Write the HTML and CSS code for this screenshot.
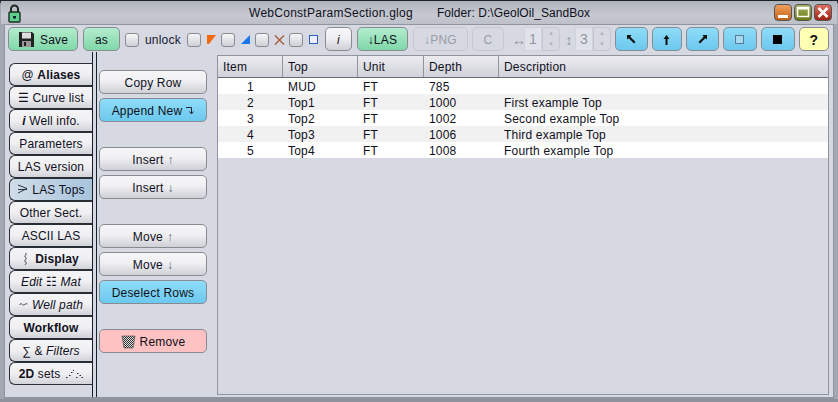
FILE: index.html
```html
<!DOCTYPE html>
<html lang="en">
<head>
<meta charset="utf-8">
<title>WebConstParamSection.glog</title>
<link rel="stylesheet" href="styles.css">
</head>
<body>
<div class="window">
  <header class="titlebar">
    <svg class="lock" width="13" height="19" viewBox="0 0 13 19"><path d="M3 9V5a3.500 3.500 0 0 1 7 0v4" fill="none" stroke="#1a2a20" stroke-width="2"/><rect x="1" y="8" width="11" height="10" rx="1" fill="#5fd08c" stroke="#1a2a20" stroke-width="1.400"/><rect x="5" y="12" width="3" height="2.500" fill="#123"/></svg>
    <div class="title"><span class="t-file">WebConstParamSection.glog</span><span class="t-folder">Folder: D:\GeolOil_SandBox</span></div>
    <div class="controls">
      <span class="ctl ctl-min"><svg width="16" height="15" viewBox="0 0 16 15"><rect x="3" y="10" width="10" height="3" fill="#fff"/></svg></span>
      <span class="ctl ctl-max"><svg width="16" height="15" viewBox="0 0 16 15"><rect x="2.500" y="2.500" width="11" height="9" fill="none" stroke="#fff" stroke-width="1.500"/><rect x="2" y="2" width="12" height="2.500" fill="#fff"/></svg></span>
      <span class="ctl ctl-close"><svg width="16" height="15" viewBox="0 0 16 15"><path d="M3.500 3l9 9M12.500 3l-9 9" stroke="#fff" stroke-width="2.600"/></svg></span>
    </div>
  </header>
  <div class="content">
    <div class="toolbar">
      <button class="btn green w-save"><svg width="17" height="17" viewBox="0 0 17 17"><path d="M1 1h13l2 2v13H1z" fill="#222"/><rect x="4" y="1.500" width="9" height="6" fill="#ddd"/><rect x="4" y="10" width="9" height="6" fill="#999"/><rect x="6" y="11" width="2" height="4" fill="#222"/></svg>Save</button>
      <button class="btn green w-as">as</button>
      <span class="check c-first"></span>
      <span class="label">unlock</span>
      <span class="check"></span>
      <svg class="mark" width="9" height="9" viewBox="0 0 9 9"><path d="M0 0h9L2 9H0z" fill="#f4690f"/></svg>
      <span class="check"></span>
      <svg class="mark" width="9" height="9" viewBox="0 0 9 9"><path d="M9 0v9H0z" fill="#1677ee"/></svg>
      <span class="check"></span>
      <svg class="mark mark-x" width="11" height="10" viewBox="0 0 11 10"><path d="M1 .5l9 9M10 .5l-9 9" stroke="#a8583a" stroke-width="1.300"/></svg>
      <span class="check"></span>
      <svg class="mark mark-last" width="9" height="9" viewBox="0 0 9 9"><rect x=".5" y=".5" width="8" height="8" fill="#eef" stroke="#2a62c8"/></svg>
      <button class="btn white w-i"><i>i</i></button>
      <button class="btn green w-las">↓LAS</button>
      <button class="btn off w-png">↓PNG</button>
      <button class="btn off w-c">C</button>
      <span class="arrow a-h">↔</span>
      <span class="spin"><span class="spin-val">1</span><span class="spin-btns"><b>▲</b><b>▼</b></span></span>
      <span class="arrow a-v">↕</span>
      <span class="spin"><span class="spin-val">3</span><span class="spin-btns"><b>▲</b><b>▼</b></span></span>
      <button class="btn blue w-a1"><svg width="9" height="9" viewBox="0 0 9 9"><path d="M0 0h4.500L3.300 1.700 8.500 7 7 8.500 1.700 3.300 0 4.500z" fill="#111"/></svg></button>
      <button class="btn blue w-a2"><svg width="7" height="10" viewBox="0 0 7 10"><path d="M3.500 0L6.500 4H4.500v6h-2V4H.5z" fill="#111"/></svg></button>
      <button class="btn blue w-a3"><svg width="9" height="9" viewBox="0 0 9 9"><path d="M9 0v4.500L7.300 3.300 2 8.500.5 7 5.700 1.700 4.500 0z" fill="#111"/></svg></button>
      <button class="btn blue w-a4"><span class="sq-open"></span></button>
      <button class="btn blue w-a5"><span class="sq-full"></span></button>
      <button class="btn yellow w-help"><b>?</b></button>
    </div>
    <div class="main">
      <nav class="tabs">
        <div class="tab"><span class="at">@</span>&nbsp;<b>Aliases</b></div>
        <div class="tab">☰&nbsp;Curve list</div>
        <div class="tab"><b><i>i</i></b>&nbsp;Well info.</div>
        <div class="tab">Parameters</div>
        <div class="tab">LAS version</div>
        <div class="tab active"><svg class="ic" width="11" height="11" viewBox="0 0 11 11"><path d="M1 1l9 3.500L1 9M1 5.500h9" fill="none" stroke="#1c2430" stroke-width=".9"/></svg>LAS Tops</div>
        <div class="tab">Other Sect.</div>
        <div class="tab">ASCII LAS</div>
        <div class="tab"><svg class="ic ic-wide" width="5" height="14" viewBox="0 0 5 14"><path d="M2.500 1c2 2-2 2.500 0 4.500s-2 2.500 0 4.500-1 2 0 3" fill="none" stroke="#222" stroke-width=".9"/></svg><b>Display</b></div>
        <div class="tab"><i>Edit</i>&nbsp;☷&nbsp;<i>Mat</i></div>
        <div class="tab"><svg class="ic" width="9" height="5" viewBox="0 0 9 5"><path d="M.5 3c1.500-3 3 0 4 0s2-2 4-1" fill="none" stroke="#334" stroke-width=".9"/></svg><i>Well path</i></div>
        <div class="tab"><b>Workflow</b></div>
        <div class="tab">∑&nbsp;&amp;&nbsp;<i>Filters</i></div>
        <div class="tab"><b>2D</b>&nbsp;sets<svg class="ic-after" width="18" height="8" viewBox="0 0 18 8"><path d="M1 7h1.500v1H1zM4 5h1.500v1H4zM6 2h1.500v1H6zM8 0h1v1H8zM12 3h1.500v1H12zM11 7h1.500v1H11zM14.500 5H16v1h-1.500zM16.500 7H18v1h-1.500z" fill="#223"/></svg></div>
      </nav>
      <div class="rule"></div>
      <div class="actions">
        <button class="btn white act">Copy Row</button>
        <button class="btn blue act">Append New <svg width="8" height="9" viewBox="0 0 8 9"><path d="M0 1.500h5.500V7M3.500 5.500l2 2.500 2-2.500" fill="none" stroke="#223" stroke-width="1"/></svg></button>
        <button class="btn white act gap-l">Insert <span class="up">↑</span></button>
        <button class="btn white act">Insert <span class="up">↓</span></button>
        <button class="btn white act gap-l">Move <span class="up">↑</span></button>
        <button class="btn white act">Move <span class="up">↓</span></button>
        <button class="btn blue act">Deselect Rows</button>
        <button class="btn pink act gap-l"><svg width="15" height="14" viewBox="0 0 15 14"><defs><pattern id="chk" width="2" height="2" patternUnits="userSpaceOnUse"><rect width="2" height="2" fill="#ddd"/><rect width="1" height="1" fill="#333"/><rect x="1" y="1" width="1" height="1" fill="#333"/></pattern></defs><path d="M1 1h13l-2 12H3z" fill="url(#chk)" stroke="#444" stroke-width=".6"/></svg>Remove</button>
      </div>
      <section class="table">
        <div class="row head"><span>Item</span><span>Top</span><span>Unit</span><span>Depth</span><span>Description</span></div>
        <div class="row"><span class="num">1</span><span>MUD</span><span>FT</span><span>785</span><span></span></div>
        <div class="row alt"><span class="num">2</span><span>Top1</span><span>FT</span><span>1000</span><span>First example Top</span></div>
        <div class="row"><span class="num">3</span><span>Top2</span><span>FT</span><span>1002</span><span>Second example Top</span></div>
        <div class="row alt"><span class="num">4</span><span>Top3</span><span>FT</span><span>1006</span><span>Third example Top</span></div>
        <div class="row"><span class="num">5</span><span>Top4</span><span>FT</span><span>1008</span><span>Fourth example Top</span></div>
      </section>
    </div>
  </div>
</div>
</body>
</html>
```
FILE: styles.css
```css
* { box-sizing: border-box; }
html, body { margin: 0; padding: 0; }
body { width: 838px; height: 402px; overflow: hidden; background: #1c2126; font: 12px "Liberation Sans", Arial, sans-serif; color: #10101c; }
.window { width: 838px; height: 401px; margin-top: 1px; display: flex; flex-direction: column; padding: 0 1px 0 1px; background: #a2a7b2; border-radius: 4px 4px 0 0; border-bottom: 3px solid #8d929d; }
.titlebar { height: 23px; flex: none; display: flex; align-items: center; padding: 0 5px 0 7px; background: linear-gradient(#aeb2bb, #c6c9d0 60%, #bdc0c8); }
.lock { flex: none; margin-top: 1px; }
.title { flex: 1; display: flex; gap: 24px; padding-left: 228px; font-size: 12px; }
.t-file { letter-spacing: .27px; }
.t-folder { letter-spacing: .07px; }
.controls { display: flex; gap: 2px; }
.ctl { width: 18px; height: 17px; border-radius: 4px; display: flex; align-items: center; justify-content: center; border: 1px solid #555; }
.ctl-min { background: linear-gradient(#f0a060, #c46010); }
.ctl-max { background: linear-gradient(#a4b060, #6c7a14); }
.ctl-close { background: linear-gradient(#e07060, #a02010); }
.content { flex: 1; min-height: 0; display: flex; flex-direction: column; margin: 0 3px; border: 1px solid #8f949e; border-bottom-width: 2px; background: #d6d9e2; }
.toolbar { height: 27px; flex: none; display: flex; align-items: flex-start; padding: 2px 0 0 3px; }
.toolbar > .check, .toolbar > .mark, .toolbar > .label, .toolbar > .arrow { align-self: center; }
.btn { height: 24px; padding: 1px 0 0; border: 1px solid #878b92; border-radius: 5px; font: 12px "Liberation Sans", Arial, sans-serif; letter-spacing: .2px; color: #10101c; display: inline-flex; align-items: center; justify-content: center; flex: none; }
.green { background: linear-gradient(#b4ecce, #7fd8a8); }
.white { background: linear-gradient(#f6f6f8 0, #f0f0f3 45%, #cfd0d6 100%); }
.blue { background: linear-gradient(#8fdcf8, #6cc8ee); }
.pink { background: #ffc2c2; }
.yellow { background: #ffffb4; }
.off { background: #d6d9e2; border-color: #c4c7cf; color: #9a9da6; }
.check { width: 14px; height: 14px; flex: none; border: 1px solid #878b92; border-radius: 3px; background: linear-gradient(#f6f6f8, #cfd0d6); }
.mark { flex: none; margin-left: 6px; margin-right: 5px; }
.mark-x { margin-left: 5px; margin-right: 4px; }
.mark-last { margin-left: 6px; margin-right: 0; }
.label { margin: 0 6px; color: #181830; letter-spacing: .2px; }
.w-save { width: 70px; gap: 5px; }
.w-as { width: 37px; margin-left: 5px; }
.c-first { margin-left: 5px; }
.w-i { width: 27px; margin-left: 7px; }
.w-las { width: 51px; margin-left: 5px; }
.w-png { width: 55px; margin-left: 5px; }
.w-c { width: 32px; margin-left: 4px; }
.arrow { flex: none; color: #8e9199; width: 12px; text-align: center; font-size: 14px; }
.a-h { margin-left: 8px; }
.a-v { margin-left: 3px; }
.spin { width: 36px; height: 24px; flex: none; display: flex; }
.spin-val { flex: 1; background: #dfe2e9; border: 1px solid #d0d3db; color: #92959e; display: flex; align-items: center; justify-content: center; font-size: 14px; }
.spin-btns { width: 18px; display: flex; flex-direction: column; border: 1px solid #c4c7cf; border-radius: 0 4px 4px 0; }
.spin-btns b { flex: 1; font-size: 6px; font-weight: normal; color: #b0b3bb; text-align: center; line-height: 11px; }
.w-a1 { width: 33px; margin-left: 4px; }
.w-a2 { width: 30px; margin-left: 4px; }
.w-a3 { width: 33px; margin-left: 4px; }
.w-a4 { width: 34px; margin-left: 4px; }
.w-a5 { width: 34px; margin-left: 4px; }
.w-help { width: 30px; margin-left: 4px; font-size: 14px; }
.sq-open { width: 9px; height: 9px; border: 1.5px solid #5a7a98; background: #a8d8ee; }
.sq-full { width: 9px; height: 9px; background: #000; }
.main { flex: 1; min-height: 0; display: flex; }
.tabs { width: 83px; flex: none; margin: 11px 0 0 4px; display: flex; flex-direction: column; }
.tab { height: 23px; flex: none; display: flex; align-items: center; justify-content: center; white-space: pre; border: 1px solid #2a2e36; border-right: 0; border-radius: 6px 0 0 6px; background: linear-gradient(#f4f4f6, #f0f0f3 50%, #d2d3d9); letter-spacing: .15px; }
.tab.active { background: linear-gradient(90deg, #d0dde8, #a8c4dc); }
.ic { margin-right: 4px; }
.ic-wide { margin-right: 7px; }
.ic-after { margin-left: 5px; }
.rule { width: 5px; flex: none; border-left: 1px solid #14202c; border-right: 1px solid #14202c; }
.actions { width: 108px; flex: none; margin: 18px 0 0 2px; display: flex; flex-direction: column; gap: 4px; }
.act { width: 108px; gap: 4px; }
.up { color: #5a6878; }
.gap-l { margin-top: 21px; }
.table { margin: 3px 0 2px 10px; width: 612px; flex: none; border: 1px solid #8f949e; background: #d6d9e2; }
.row { display: grid; grid-template-columns: 65px 75px 66px 75px 1fr; height: 16px; padding-top: 1px; background: #fff; align-items: center; }
.row span { padding-left: 5px; letter-spacing: .2px; white-space: nowrap; }
.row.alt { background: #f1f1f2; }
.row .num { text-align: center; padding: 0; }
.row.head { height: 22px; padding-top: 0; background: linear-gradient(#ececf0, #d0d2da); border-bottom: 1px solid #666c78; }
.row.head span { height: 100%; display: flex; align-items: center; border-right: 1px solid #8f949e; }
.row.head span:last-child { border-right: 0; }
```
